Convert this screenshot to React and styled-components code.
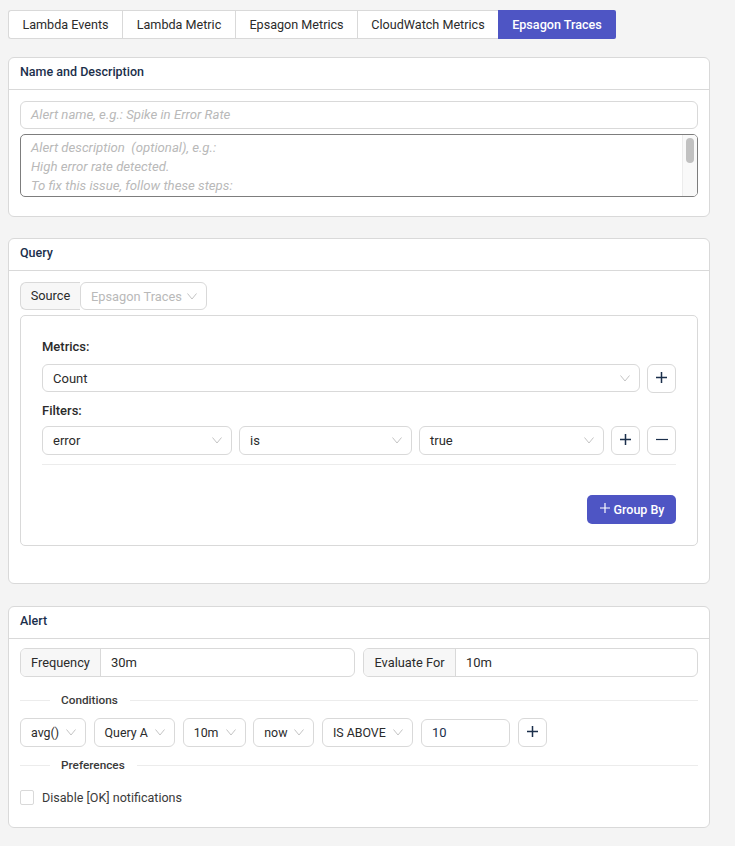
import React from 'react';
import styled, { createGlobalStyle } from 'styled-components';

const GlobalStyle = createGlobalStyle`
  html, body {
    margin: 0;
    padding: 0;
    background: #f4f4f4;
    font-family: Roboto, "Liberation Sans", sans-serif;
    font-size: 13px;
    color: #2b2b2b;
    overflow: hidden;
  }
  * { box-sizing: border-box; }
`;

const Page = styled.div`
  width: 702px;
  margin: 10px 0 0 8px;
`;

const Tabs = styled.div`
  display: inline-flex;
  height: 29px;
  margin-bottom: 18px;
  vertical-align: top;
`;

const Tab = styled.div`
  width: ${p => p.$width}px;
  display: flex;
  align-items: center;
  justify-content: center;
  background: ${p => (p.$active ? '#4e55c4' : '#fff')};
  color: ${p => (p.$active ? '#fff' : '#2b2b2b')};
  font-size: 12.6px;
  font-weight: ${p => (p.$active ? 500 : 400)};
  border: ${p => (p.$active ? 'none' : '1px solid #d9d9d9')};
  border-right-width: 0;
  &:first-child { border-radius: 3px 0 0 3px; }
  &:last-child { border-radius: 0 2px 2px 0; }
`;

const Card = styled.section`
  background: #fff;
  border: 1px solid #d9d9d9;
  border-radius: 6px;
  height: ${p => p.$height}px;
  margin-bottom: ${p => p.$gap}px;
`;

const CardTitle = styled.h3`
  margin: 0;
  height: 32px;
  padding: 0 11px 4px;
  display: flex;
  align-items: center;
  font-size: 12.5px;
  font-weight: 500;
  color: #1b2f4b;
  border-bottom: 1px solid #d9d9d9;
`;

const CardBody = styled.div`
  padding: ${p => p.$top}px 11px 0;
  display: flex;
  flex-direction: column;
`;

const TextInput = styled.div`
  height: 28px;
  border: 1px solid #d9d9d9;
  border-radius: 6px;
  padding: 0 10px 2px;
  display: flex;
  align-items: center;
  color: #b9b9b9;
  font-size: 13.2px;
  font-style: italic;
`;

const TextArea = styled.div`
  position: relative;
  height: 63px;
  margin-top: 5px;
  border: 1px solid #7d7d7d;
  border-radius: 5px;
  padding: 3px 10px;
  color: #b9b9b9;
  font-size: 13.2px;
  font-style: italic;
  line-height: 19px;
  overflow: hidden;
`;

const ScrollTrack = styled.div`
  position: absolute;
  top: 0;
  right: 0;
  bottom: 0;
  width: 15px;
  background: #f9f9f9;
  border-left: 1px solid #ececec;
`;

const ScrollThumb = styled.div`
  width: 8px;
  height: 25px;
  margin: 3px 0 0 3px;
  border-radius: 4px;
  background: #c1c1c1;
`;

const SourceRow = styled.div`
  display: flex;
  height: 28px;
`;

const SourceLabel = styled.div`
  width: 60px;
  display: flex;
  align-items: center;
  justify-content: center;
  background: #f7f7f7;
  border: 1px solid #d9d9d9;
  border-right: none;
  border-radius: 6px 0 0 6px;
  font-size: 12.8px;
  padding-bottom: 2px;
`;

const Select = styled.div`
  flex: ${p => (p.$grow ? '1 1 0' : '0 0 auto')};
  width: ${p => (p.$width ? `${p.$width}px` : 'auto')};
  height: ${p => p.$height || 29}px;
  display: flex;
  align-items: center;
  justify-content: space-between;
  padding: 0 9px 0 10px;
  background: #fff;
  border: 1px solid #d9d9d9;
  border-radius: 6px;
  font-size: ${p => p.$size || 13}px;
  color: ${p => (p.$muted ? '#b9b9b9' : '#2b2b2b')};
`;

const Chevron = () => (
  <svg width="10" height="7" viewBox="0 0 10 7" fill="none" stroke="#c4c4c4" strokeWidth="1">
    <path d="M0.5 0.5 L5 6 L9.5 0.5" />
  </svg>
);

const QueryBox = styled.div`
  height: 231px;
  margin-top: 5px;
  padding: 23px 21px 0;
  border: 1px solid #d9d9d9;
  border-radius: 5px;
`;

const FieldLabel = styled.div`
  height: 16px;
  line-height: 16px;
  font-weight: 500;
  color: #2b2b2b;
  margin-bottom: ${p => p.$gap}px;
`;

const Row = styled.div`
  display: flex;
  gap: ${p => p.$spacing || 7}px;
  margin-bottom: ${p => p.$gap || 0}px;
`;

const IconButton = styled.button`
  flex: 0 0 29px;
  width: 29px;
  height: 29px;
  padding: 0 0 3px;
  display: flex;
  align-items: center;
  justify-content: center;
  background: #fff;
  border: 1px solid #d9d9d9;
  border-radius: 6px;
`;

const Plus = ({ color = '#1b2f4b', size = 11, width = 1.5 }) => (
  <svg width={size} height={size} viewBox="0 0 11 11" fill="none" stroke={color} strokeWidth={width}>
    <path d="M5.5 0 V11 M0 5.5 H11" />
  </svg>
);

const Minus = () => (
  <svg width="12" height="11" viewBox="0 0 12 11" fill="none" stroke="#1b2f4b" strokeWidth="1.2">
    <path d="M0 5.5 H12" />
  </svg>
);

const Rule = styled.div`
  height: 1px;
  background: #ececec;
  margin-top: 9px;
`;

const Actions = styled.div`
  display: flex;
  justify-content: flex-end;
  margin-top: 30px;
`;

const GroupBy = styled.button`
  width: 89px;
  height: 29px;
  display: flex;
  align-items: center;
  justify-content: center;
  gap: 4px;
  padding: 0 0 0 1px;
  border: none;
  border-radius: 5px;
  background: #4e55c4;
  color: #fff;
  font: 500 12.5px Roboto, sans-serif;
  svg { margin-bottom: 3px; }
`;

const AddonField = styled.div`
  flex: 1 1 0;
  height: 29px;
  display: flex;
  align-items: center;
  border: 1px solid #d9d9d9;
  border-radius: 6px;
  overflow: hidden;
`;

const Addon = styled.div`
  width: ${p => p.$width}px;
  height: 100%;
  display: flex;
  align-items: center;
  justify-content: center;
  background: #f7f7f7;
  border-right: 1px solid #d9d9d9;
  font-size: 12.8px;
`;

const AddonValue = styled.div`
  padding: 0 10px;
`;

const SectionRule = styled.div`
  display: flex;
  align-items: center;
  height: 16px;
  margin: ${p => p.$top}px 0 ${p => p.$bottom}px;
  font-size: 11.8px;
  font-weight: 500;
  color: #3a3a3a;
  &::before {
    content: '';
    width: 30px;
    height: 1px;
    margin-right: 11px;
    background: #ececec;
  }
  &::after {
    content: '';
    flex: 1;
    height: 1px;
    margin-left: 12px;
    background: #ececec;
  }
`;

const ValueInput = styled.div`
  width: 89.5px;
  height: 28px;
  margin-top: 1px;
  padding: 0 10px 1px;
  display: flex;
  align-items: center;
  border: 1px solid #d9d9d9;
  border-radius: 6px;
  color: #1b2f4b;
`;

const CheckRow = styled.label`
  display: flex;
  align-items: center;
  gap: 8px;
  margin-top: 17px;
  font-size: 12.55px;
  color: #3a3a3a;
`;

const Box = styled.span`
  width: 14px;
  height: 15px;
  border: 1px solid #d9d9d9;
  border-radius: 2px;
  background: #fff;
`;

const tabs = [
  ['Lambda Events', 114],
  ['Lambda Metric', 113],
  ['Epsagon Metrics', 122],
  ['CloudWatch Metrics', 141],
  ['Epsagon Traces', 118],
];

const conditions = [
  ['avg()', 66],
  ['Query A', 81.5],
  ['10m', 63],
  ['now', 61],
  ['IS ABOVE', 91.5],
];

const Dropdown = ({ label, ...rest }) => (
  <Select {...rest}>
    <span>{label}</span>
    <Chevron />
  </Select>
);

export default function App() {
  return (
    <>
      <GlobalStyle />
      <Page>
        <Tabs>
          {tabs.map(([name, width]) => (
            <Tab key={name} $width={width} $active={name === 'Epsagon Traces'}>{name}</Tab>
          ))}
        </Tabs>

        <Card $height={160} $gap={21}>
          <CardTitle>Name and Description</CardTitle>
          <CardBody $top={11}>
            <TextInput>Alert name, e.g.: Spike in Error Rate</TextInput>
            <TextArea>
              Alert description&nbsp; (optional), e.g.:<br />
              High error rate detected.<br />
              To fix this issue, follow these steps:
              <ScrollTrack><ScrollThumb /></ScrollTrack>
            </TextArea>
          </CardBody>
        </Card>

        <Card $height={346} $gap={22}>
          <CardTitle>Query</CardTitle>
          <CardBody $top={11}>
            <SourceRow>
              <SourceLabel>Source</SourceLabel>
              <Dropdown label="Epsagon Traces" $muted $width={127} $height={28} $size={12.8} />
            </SourceRow>
            <QueryBox>
              <FieldLabel $gap={9}>Metrics:</FieldLabel>
              <Row $gap={10}>
                <Dropdown label="Count" $grow $height={28} />
                <IconButton><Plus /></IconButton>
              </Row>
              <FieldLabel $gap={7}>Filters:</FieldLabel>
              <Row>
                <Dropdown label="error" $width={190} />
                <Dropdown label="is" $width={173} />
                <Dropdown label="true" $width={185} />
                <IconButton><Plus /></IconButton>
                <IconButton><Minus /></IconButton>
              </Row>
              <Rule />
              <Actions>
                <GroupBy><Plus color="#fff" size={10} width={1.3} />Group By</GroupBy>
              </Actions>
            </QueryBox>
          </CardBody>
        </Card>

        <Card $height={222} $gap={0}>
          <CardTitle>Alert</CardTitle>
          <CardBody $top={9}>
            <Row $spacing={8}>
              <AddonField>
                <Addon $width={80}>Frequency</Addon>
                <AddonValue>30m</AddonValue>
              </AddonField>
              <AddonField>
                <Addon $width={92}>Evaluate For</Addon>
                <AddonValue>10m</AddonValue>
              </AddonField>
            </Row>
            <SectionRule $top={15} $bottom={10}>Conditions</SectionRule>
            <Row $spacing={7.6}>
              {conditions.map(([label, width]) => (
                <Dropdown key={label} label={label} $width={width} $size={12.4} />
              ))}
              <ValueInput>10</ValueInput>
              <IconButton><Plus /></IconButton>
            </Row>
            <SectionRule $top={10} $bottom={0}>Preferences</SectionRule>
            <CheckRow>
              <Box />
              Disable [OK] notifications
            </CheckRow>
          </CardBody>
        </Card>
      </Page>
    </>
  );
}
